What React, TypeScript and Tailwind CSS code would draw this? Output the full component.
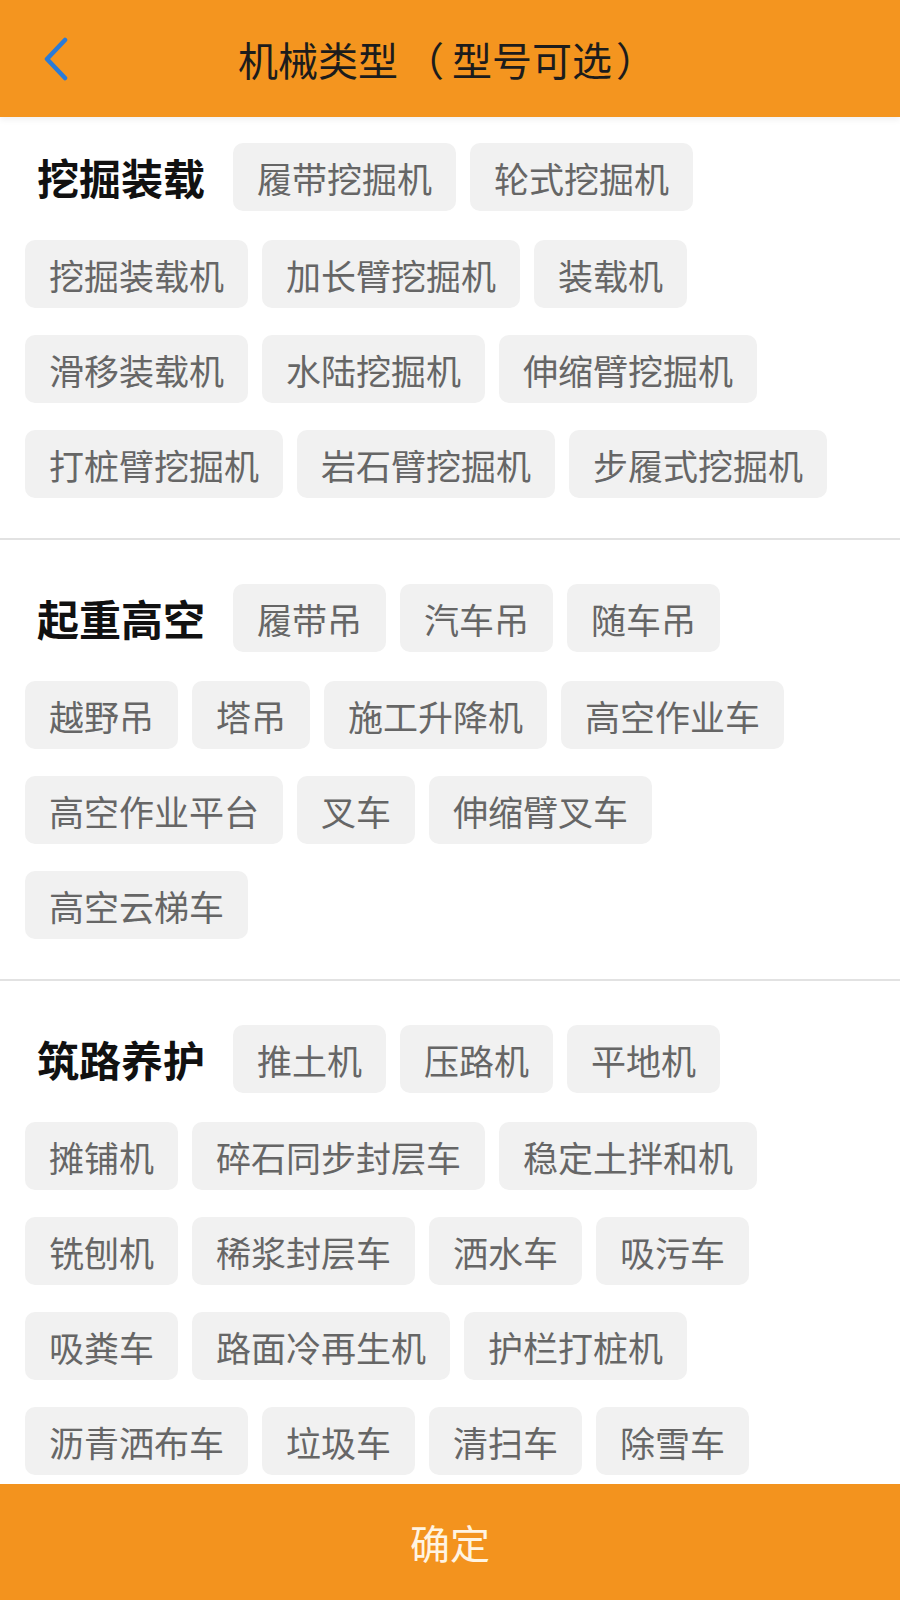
const sections = [
  {
    title: "挖掘装载",
    items: [
      "履带挖掘机",
      "轮式挖掘机",
      "挖掘装载机",
      "加长臂挖掘机",
      "装载机",
      "滑移装载机",
      "水陆挖掘机",
      "伸缩臂挖掘机",
      "打桩臂挖掘机",
      "岩石臂挖掘机",
      "步履式挖掘机",
    ],
  },
  {
    title: "起重高空",
    items: [
      "履带吊",
      "汽车吊",
      "随车吊",
      "越野吊",
      "塔吊",
      "施工升降机",
      "高空作业车",
      "高空作业平台",
      "叉车",
      "伸缩臂叉车",
      "高空云梯车",
    ],
  },
  {
    title: "筑路养护",
    items: [
      "推土机",
      "压路机",
      "平地机",
      "摊铺机",
      "碎石同步封层车",
      "稳定土拌和机",
      "铣刨机",
      "稀浆封层车",
      "洒水车",
      "吸污车",
      "吸粪车",
      "路面冷再生机",
      "护栏打桩机",
      "沥青洒布车",
      "垃圾车",
      "清扫车",
      "除雪车",
    ],
  },
];

export default function App() {
  return (
    <div
      className="flex flex-col h-screen w-full bg-white overflow-hidden"
      style={{ fontFamily: '"Noto Sans CJK SC", "Noto Sans", sans-serif' }}
    >
      {/* header */}
      <div className="relative z-10 flex items-center h-[117px] shrink-0 bg-[#f4951f] shadow-[0_3px_6px_rgba(0,0,0,0.06)]">
        <div className="w-[110px] pl-[42px] flex items-center">
          <svg width="28" height="44" viewBox="0 0 28 44" fill="none">
            <polyline
              points="23,3 5,22 23,41"
              stroke="#2a7bd8"
              strokeWidth="4.5"
              strokeLinecap="round"
              strokeLinejoin="round"
            />
          </svg>
        </div>
        <h1 className="flex-1 text-center text-[40px] text-[#1c1c1c] leading-none">
          机械类型<span className="ml-[6px] mr-[8px]">（</span>型号可选
          <span className="ml-[4px] mr-[6px]">）</span>
        </h1>
        <div className="w-[110px]" />
      </div>

      {/* content */}
      <div className="flex-1 overflow-hidden">
        {sections.map((section, index) => (
          <div
            key={section.title}
            className={
              index === 0
                ? "px-[25px] pt-[24px] pb-[40px] border-b-2 border-[#e2e2e2]"
                : index === sections.length - 1
                ? "px-[25px] pt-[42px] pb-[40px]"
                : "px-[25px] pt-[42px] pb-[40px] border-b-2 border-[#e2e2e2]"
            }
          >
            <div className="flex flex-wrap items-center gap-x-[14px] gap-y-[27px]">
              <div className="w-[194px] h-[72px] pl-[12px] flex items-center text-[42px] font-bold text-[#111] leading-none">
                {section.title}
              </div>
              {section.items.map((item) => (
                <div
                  key={item}
                  className="h-[68px] px-6 flex items-center rounded-[10px] bg-[#f1f1f1] text-[35px] text-[#666] leading-none"
                >
                  {item}
                </div>
              ))}
            </div>
          </div>
        ))}
      </div>

      {/* confirm */}
      <div className="h-[116px] shrink-0 flex items-center justify-center bg-[#f3931e] text-[40px] text-[#fff4e2] leading-none">
        确定
      </div>
    </div>
  );
}
